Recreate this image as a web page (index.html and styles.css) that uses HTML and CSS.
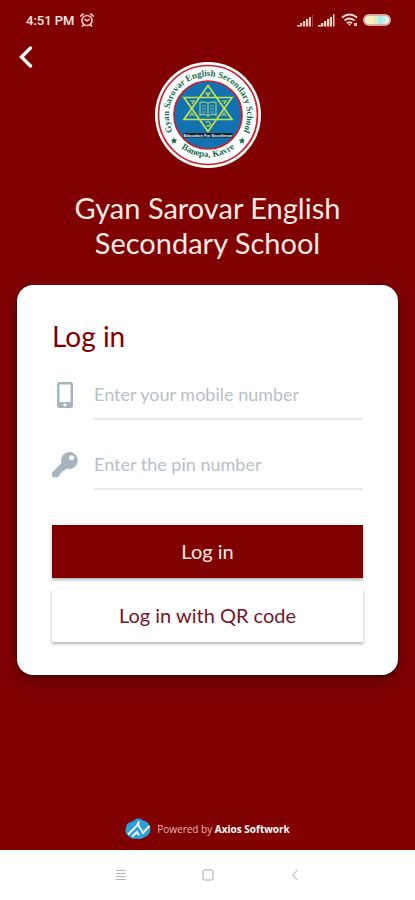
FILE: index.html
```html
<!DOCTYPE html>
<html lang="en">
<head>
<meta charset="utf-8">
<meta name="viewport" content="width=device-width, initial-scale=1">
<title>Gyan Sarovar English Secondary School</title>
<link rel="stylesheet" href="styles.css">
</head>
<body>
<div class="status">
  <div class="status-left">
    <span>4:51 PM</span>
    <svg width="16" height="16" viewBox="0 0 16 16" fill="none" stroke="#e6bdb6" stroke-width="1.700" stroke-linecap="round"><circle cx="8" cy="8.500" r="5"/><path d="M1.800 4 4.200 2M14.200 4 11.800 2M4.500 12.500 3.500 14M11.500 12.500 12.500 14M6 7.500 8 9 10 7.500"/></svg>
  </div>
  <div class="status-right">
    <svg width="17" height="13" viewBox="0 0 17 13" fill="#e9c3bd"><path d="M0 11h3v1.500H0zM3 9h2.300v3.500H3zM6 7h2.300v5.500H6zM9 5h2.300v7.500H9z"/><path d="M12 3h2v9.500h-2z"/><path d="M15 1h1v11.500h-1z" opacity=".35"/></svg>
    <svg width="17" height="13" viewBox="0 0 17 13" fill="#f2d5cf"><path d="M0 11h3v1.500H0zM3 9h2.300v3.500H3zM6 7h2.300v5.500H6zM9 5h2.300v7.500H9zM12 3h2v9.500h-2zM15 0h1.500v12.500H15z"/></svg>
    <svg class="wifi" width="18" height="14" viewBox="0 0 18 14" fill="none" stroke="#f2d5cf" stroke-width="2"><path d="M1 4.500Q8.500-1.500 16 4.500M3.500 7.500Q8.500 3.500 13.500 7.500M6 10.200Q8.500 8.200 11 10.200"/><path d="M7 11h3l-1.500 2zM13 10h3v3h-3z" fill="#e6bdb6" stroke="none"/></svg>
    <span class="battery"></span>
  </div>
</div>
<main>
  <button class="back" type="button" aria-label="Back">
    <svg width="14" height="22" viewBox="0 0 14 22" fill="none" stroke="#fff" stroke-width="3.400" stroke-linecap="round"><path d="M11.500 2 2.500 11 11.500 20"/></svg>
  </button>
  <header>
    <svg class="crest" width="106" height="106" viewBox="0 0 106 106">
      <defs>
        <path id="arc-top" d="M17.800 70A39 39 0 1 1 88.200 70"/>
        <path id="arc-bottom" d="M18 78A44.500 44.500 0 0 0 88 78"/>
      </defs>
      <circle cx="53" cy="53" r="53" fill="#fff"/>
      <circle cx="53" cy="53" r="49.500" fill="none" stroke="#c9212b" stroke-width="1.700"/>
      <circle cx="53" cy="53" r="34" fill="#1272b0" stroke="#c9212b" stroke-width="1.700"/>
      <text class="ring"><textPath href="#arc-top" startOffset="50%" text-anchor="middle">Gyan Sarovar English Secondary School</textPath></text>
      <text class="ring"><textPath href="#arc-bottom" startOffset="50%" text-anchor="middle">Banepa, Kavre</textPath></text>
      <path d="M19 75.500l1 2 2.200.2-1.600 1.500.4 2.200-2-1-2 1 .4-2.200-1.600-1.500 2.200-.2zM87 75.500l1 2 2.200.2-1.600 1.500.4 2.200-2-1-2 1 .4-2.200-1.600-1.500 2.200-.2z" fill="#146b4b"/>
      <g fill="none" stroke="#c4e34c" stroke-width="1.700">
        <path d="M53 23.500 77 57.500H29zM53 69.500 29 35.500H77z"/>
        <path d="M45 40.500q4.500-1.500 8 1 3.500-2.500 8-1v12.500q-4.500-1.500-8 1-3.500-2.500-8-1zM53 41.500V54" stroke-width="1.200" stroke="#9ad17c"/>
        <path d="M47 44h4M47 47h4M47 50h4M55 44h4M55 47h4M55 50h4" stroke-width=".8" stroke="#9ad17c"/>
        <path d="M51 31h4l-2 3zM35 39h4l-2 3M67 39h4l-2 3M35 54l2-3 2 3M67 54l2-3 2 3M51 61q2-3 4 0t-4 3" stroke-width="1.200"/>
      </g>
      <path d="M28.500 71h49v4.500h-49z" fill="#102027"/>
      <text class="motto" x="53" y="74.800" text-anchor="middle">Education For Excellence</text>
    </svg>
    <h1>Gyan Sarovar English Secondary School</h1>
  </header>
  <form class="card">
    <h2>Log in</h2>
    <div class="field">
      <label for="mobile" aria-label="Mobile number">
        <svg width="26" height="28" viewBox="0 0 26 28"><path fill="#a7b6be" fill-rule="evenodd" d="M7.500 1h11A2.500 2.500 0 0 1 21 3.500v21a2.500 2.500 0 0 1-2.500 2.500h-11A2.500 2.500 0 0 1 5 24.500v-21A2.500 2.500 0 0 1 7.500 1zM7.500 3.500v17.500h11V3.500zM13 22.200a1.600 1.600 0 1 0 0 3.200 1.600 1.600 0 0 0 0-3.200z"/></svg>
      </label>
      <input id="mobile" type="tel" placeholder="Enter your mobile number">
    </div>
    <div class="field">
      <label for="pin" aria-label="Pin number">
        <svg width="26" height="28" viewBox="0 0 26 28"><path fill="#a7b6be" fill-rule="evenodd" d="M17.500 1a8.500 8.500 0 1 1-3 16.500L12.500 19.500 10.500 20.300 7.500 24.300 5.500 26.300H1.500Q0 26.300 0 24.700V21.500L9.500 12A8.500 8.500 0 0 1 17.500 1zM19.500 4.200a2.500 2.500 0 1 0 0 5 2.500 2.500 0 0 0 0-5z"/></svg>
      </label>
      <input id="pin" type="password" placeholder="Enter the pin number">
    </div>
    <div class="actions">
      <button class="btn primary" type="submit">Log in</button>
      <button class="btn" type="button">Log in with QR code</button>
    </div>
  </form>
  <footer>
    <svg width="26" height="22" viewBox="0 0 26 22"><path fill="#2b9fdb" d="M6 4Q9 3 10 1.500 14-1 18 2.500 25 4 25.500 11 25 17 20 19 16 22 12 20.500 7 22 4 18.500-1 15 1 10 1 5 6 4z"/><path d="M3 16.500 13 6.500l5 8.500L24.500 8M7 18.500l5-4.500 2 3.500M12 7l2.500-3.500" fill="none" stroke="#f4fbff" stroke-width="1.900"/></svg>
    <p>Powered by <b>Axios Softwork</b></p>
  </footer>
</main>
<nav>
  <button type="button" aria-label="Recent apps"><svg width="12" height="12" viewBox="0 0 12 12" stroke="#b5b5b5" fill="none"><path d="M1 1.500h10M1 4.500h10M1 7.500h10M1 10.500h10"/></svg></button>
  <button type="button" aria-label="Home"><svg width="12" height="12" viewBox="0 0 12 12" stroke="#a8a8a8" fill="none"><rect x="1" y="1" width="10" height="10" rx="1.500"/></svg></button>
  <button type="button" aria-label="Back"><svg width="12" height="12" viewBox="0 0 12 12" stroke="#a8a8a8" fill="none"><path d="M8.500 1 3.500 6l5 5"/></svg></button>
</nav>
</body>
</html>
```
FILE: styles.css
```css
* { box-sizing: border-box; }
body {
  margin: 0;
  min-height: 100vh;
  display: flex;
  flex-direction: column;
  background: #800000;
  color: #fbeae4;
  font-family: Lato, "Open Sans", sans-serif;
}
button { border: 0; padding: 0; background: none; font: inherit; cursor: pointer; }
svg { display: block; }
h1, h2, p { margin: 0; font-weight: 400; }

.status {
  height: 40px;
  padding: 0 24px 0 26px;
  display: flex;
  align-items: center;
  justify-content: space-between;
  font: 500 13px Roboto, sans-serif;
}
.status-left { display: flex; align-items: center; gap: 4px; }
.status-right { display: flex; align-items: center; gap: 4px; }
.wifi { margin-left: 2px; }
.battery {
  width: 28px;
  height: 12px;
  border: 2px solid #d9aaa5;
  border-radius: 6px;
  background: linear-gradient(90deg, #dff5ee, #fff0a8 30%, #a9e9ee 65%, #f4f7e9);
}

main { flex: 1; display: flex; flex-direction: column; padding: 0 17px; }
.back { width: 22px; height: 22px; margin-top: 6px; padding-left: 2px; }
header { display: flex; flex-direction: column; align-items: center; margin-top: -6px; }
.ring { font: bold 9px "Liberation Serif", serif; fill: #146b4b; }
.motto { font: bold 4px "Liberation Sans", sans-serif; fill: #fff; }
h1 { max-width: 310px; margin-top: 22px; font-size: 29px; line-height: 35px; text-align: center; }

.card {
  margin-top: 25px;
  padding: 31px 35px 33px;
  border-radius: 16px;
  background: #fff;
  box-shadow: 0 6px 16px rgba(0, 0, 0, .3), 0 1px 3px rgba(0, 0, 0, .4);
}
h2 { color: #800000; font-size: 28px; line-height: 40px; }
.field { height: 50px; margin-top: 14px; display: flex; align-items: center; gap: 16px; }
.field + .field { margin-top: 20px; }
input {
  flex: 1;
  min-width: 0;
  height: 50px;
  padding: 0;
  border: 0;
  border-bottom: 2px solid #e9e9e9;
  outline: 0;
  background: none;
  color: #333;
  font: 18px Lato, sans-serif;
}
input::placeholder { color: #b9c0c4; opacity: 1; }
.actions { display: grid; gap: 11px; margin-top: 35px; }
.btn {
  height: 53px;
  padding-bottom: 2px;
  background: #fff;
  color: #74152a;
  font-size: 20px;
  box-shadow: 0 2px 3px rgba(0, 0, 0, .3);
}
.primary { background: #800000; color: #fbeae4; }

footer {
  margin-top: auto;
  padding-bottom: 10px;
  display: flex;
  align-items: center;
  justify-content: center;
  gap: 6px;
  font: 10px "Open Sans", sans-serif;
}
footer p { color: #e8b8b0; }
footer b { color: #fff; font-weight: 700; }

nav { height: 50px; background: #fff; display: flex; align-items: center; justify-content: center; gap: 63px; }
nav button { width: 24px; height: 24px; display: grid; place-items: center; }
```
